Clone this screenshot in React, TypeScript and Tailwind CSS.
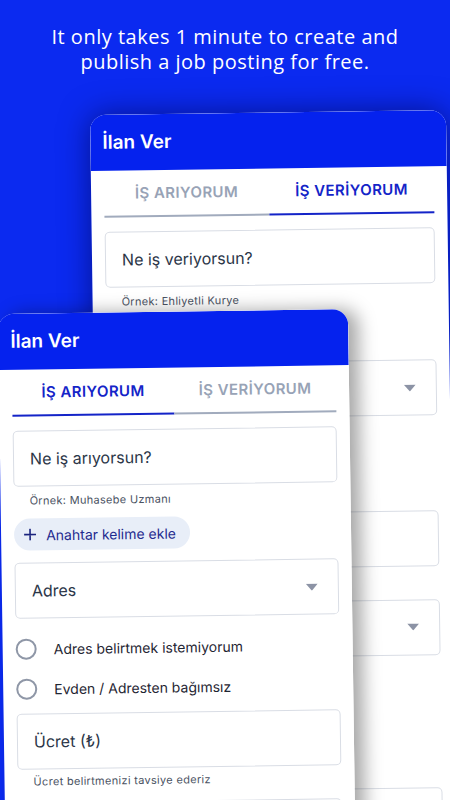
import React from "react";

type Tab = "seek" | "give";

function Chevron() {
  return (
    <svg width="12" height="7" viewBox="0 0 12 7" className="shrink-0">
      <path d="M0 0 L12 0 L6 7 Z" fill="#8c93a5" />
    </svg>
  );
}

function Field({ label, select }: { label: string; select?: boolean }) {
  return (
    <div className="flex h-[56px] items-center justify-between rounded-[5px] border border-[#d9dde5] bg-white pl-4 pr-5">
      <span className="text-[16px] text-[#2b3648]">{label}</span>
      {select && <Chevron />}
    </div>
  );
}

function Radio({ label }: { label: string }) {
  return (
    <div className="flex items-center gap-[17px]">
      <span className="h-[21px] w-[21px] rounded-full border-2 border-[#8f97a7]" />
      <span className="text-[14px] text-[#1f2633]">{label}</span>
    </div>
  );
}

function PhoneCard({ tab }: { tab: Tab }) {
  const seek = tab === "seek";
  return (
    <div className="overflow-hidden rounded-t-[16px] bg-white">
      <div className="flex h-[56px] items-center bg-[#0522ee] px-[12px]">
        <span className="text-[19px] font-semibold text-white">İlan Ver</span>
      </div>
      <div className="px-[13px]">
        <div className="flex pt-[12px]">
          <div
            className={
              seek
                ? "flex-1 border-b-2 border-[#1424c8] pb-[10px] text-center text-[15px] font-semibold tracking-[0.4px] text-[#1424c8]"
                : "flex-1 border-b-2 border-[#a1abbd] pb-[10px] text-center text-[15px] font-semibold tracking-[0.4px] text-[#98a3b6]"
            }
          >
            İŞ ARIYORUM
          </div>
          <div
            className={
              seek
                ? "flex-1 border-b-2 border-[#a1abbd] pb-[10px] text-center text-[15px] font-semibold tracking-[0.4px] text-[#98a3b6]"
                : "flex-1 border-b-2 border-[#1424c8] pb-[10px] text-center text-[15px] font-semibold tracking-[0.4px] text-[#1424c8]"
            }
          >
            İŞ VERİYORUM
          </div>
        </div>

        <div className="mt-[14px]">
          <Field label={seek ? "Ne iş arıyorsun?" : "Ne iş veriyorsun?"} />
        </div>
        <div className="mt-[6px] pl-4 text-[11px] tracking-[0.3px] text-[#4a5262]">
          {seek ? "Örnek: Muhasebe Uzmanı" : "Örnek: Ehliyetli Kurye"}
        </div>

        <div className="mt-[10px] flex">
          <div className="flex h-[32px] items-center gap-[10px] rounded-full bg-[#e8eef8] pl-[10px] pr-[14px]">
            <svg width="12" height="12" viewBox="0 0 12 12">
              <path d="M6 0 V12 M0 6 H12" stroke="#1a237e" strokeWidth="1.6" />
            </svg>
            <span className="text-[14px] text-[#1f2b8f]">Anahtar kelime ekle</span>
          </div>
        </div>

        <div className="mt-[12px]">
          <Field label="Adres" select />
        </div>

        <div className="mt-[20px] flex flex-col gap-[19px]">
          <Radio label="Adres belirtmek istemiyorum" />
          <Radio label="Evden / Adresten bağımsız" />
        </div>

        <div className="mt-[14px]">
          <Field label="Ücret (₺)" />
        </div>
        <div className="mt-[4px] pl-4 text-[11px] tracking-[0.3px] text-[#4a5262]">
          Ücret belirtmenizi tavsiye ederiz
        </div>

        <div className="mt-[12px]">
          <Field label="Çalışma şekli" select />
        </div>
        <div className="mt-[28px] flex flex-col gap-[22px]">
          <Radio label="Tam zamanlı" />
          <Radio label="Yarı zamanlı" />
        </div>
        <div className="mt-[40px]">
          <Field label="Açıklama" />
        </div>
      </div>
    </div>
  );
}

export default function App() {
  return (
    <div
      className="relative h-[800px] w-[450px] overflow-hidden bg-[#0b2af0]"
      style={{ fontFamily: "Inter, 'Noto Sans', sans-serif" }}
    >
      <div
        className="pt-[24px] text-center text-[20px] leading-[25px] tracking-[0.5px] text-white"
        style={{ fontFamily: "'Open Sans', 'Liberation Sans', sans-serif" }}
      >
        It only takes 1 minute to create and
        <br />
        publish a job posting for free.
      </div>

      {/* back phone card */}
      <div className="absolute left-[90px] top-[115px] w-[356px] origin-top-left -rotate-[0.8deg] rounded-t-[16px] shadow-[0_0_30px_rgba(0,0,60,0.55)]">
        <PhoneCard tab="give" />
      </div>

      {/* front phone card */}
      <div className="absolute left-[-2px] top-[314px] w-[350px] origin-top-left -rotate-[0.8deg] rounded-t-[16px] shadow-[10px_0_18px_rgba(0,0,0,0.35)]">
        <PhoneCard tab="seek" />
      </div>
    </div>
  );
}
